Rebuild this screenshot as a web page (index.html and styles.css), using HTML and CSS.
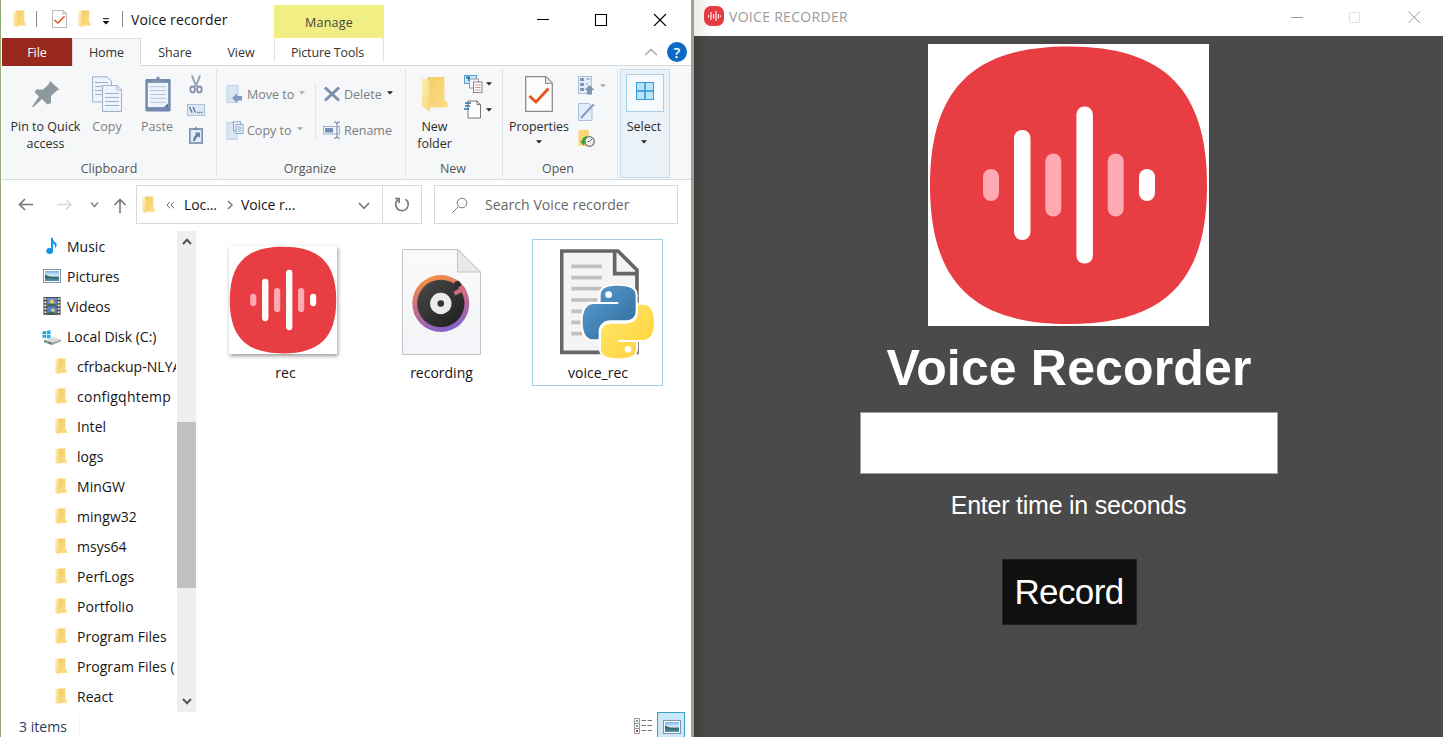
FILE: index.html
```html
<!DOCTYPE html>
<html lang="en">
<head>
<meta charset="utf-8">
<title>Voice recorder</title>
<link rel="stylesheet" href="styles.css">
</head>
<body>
<svg class="defs" aria-hidden="true">
  <defs>
    <linearGradient id="gFold" x1="0" y1="0" x2="1" y2="1"><stop offset="0" stop-color="#f3cb67"/><stop offset="1" stop-color="#fcdf86"/></linearGradient>
    <linearGradient id="gFlap" x1="0" y1="0" x2="1" y2="1"><stop offset="0" stop-color="#fdeeb4"/><stop offset="1" stop-color="#f8d778"/></linearGradient>
    <linearGradient id="gBlue" x1="0" y1="0" x2="1" y2="1"><stop offset="0" stop-color="#5a9fd4"/><stop offset="1" stop-color="#306998"/></linearGradient>
    <linearGradient id="gYellow" x1="1" y1="1" x2="0" y2="0"><stop offset="0" stop-color="#ffe873"/><stop offset="1" stop-color="#ffd133"/></linearGradient>
    <linearGradient id="gRing" x1=".3" y1="0" x2=".6" y2="1"><stop offset="0" stop-color="#f79342"/><stop offset=".5" stop-color="#c8698a"/><stop offset="1" stop-color="#8163cf"/></linearGradient>
    <linearGradient id="gSky" x1="0" y1="0" x2="0" y2="1"><stop offset="0" stop-color="#7ab4f2"/><stop offset=".5" stop-color="#dceffc"/><stop offset=".6" stop-color="#3f7376"/><stop offset="1" stop-color="#4f93ba"/></linearGradient>
    <linearGradient id="gPaper" x1="0" y1="0" x2="0" y2="1"><stop offset="0" stop-color="#fafafa"/><stop offset="1" stop-color="#f2f4f7"/></linearGradient>
    <linearGradient id="gVinyl" x1="0" y1="0" x2="1" y2="1"><stop offset="0" stop-color="#4a4a4a"/><stop offset="1" stop-color="#1d1d1d"/></linearGradient>
  </defs>
  <symbol id="folder" viewBox="0 0 13 18" preserveAspectRatio="none">
    <path d="M3 .5H11.3V12.2L12.8 13V15.8H3Z" fill="url(#gFold)"/><path d="M.4.6 4.2 2.7V17.8L.4 15Z" fill="url(#gFlap)"/>
  </symbol>
  <symbol id="logo" viewBox="0 0 281 281">
    <path d="M2 141C2 45 45 2 140.500 2S279 45 279 141 236 279.500 140.500 279.500 2 237 2 141Z" fill="#e83d43"/>
    <g fill="#ffaab2"><rect x="55" y="124.500" width="16" height="32" rx="8"/><rect x="117.300" y="109" width="16" height="63" rx="8"/><rect x="179.700" y="109" width="16" height="63" rx="8"/></g>
    <g fill="#fff"><rect x="86" y="85.500" width="16.500" height="110" rx="8"/><rect x="148.400" y="62" width="16.500" height="157" rx="8"/><rect x="211" y="124.500" width="16" height="32" rx="8"/></g>
  </symbol>
  <symbol id="caret" viewBox="0 0 6 4"><path d="M0 .3H6L3 3.500Z"/></symbol>
  <symbol id="checkdoc" viewBox="0 0 28 36" preserveAspectRatio="none">
    <path d="M.7.7H21L27.300 7V35.300H.7Z" fill="#fcfcfc" stroke="#8c8c8c" stroke-width="1.300"/><path d="M20.500.7V7.400H27.300" fill="#e6e6e6" stroke="#8c8c8c"/>
    <path d="M4.500 20 11 26 23.500 12.500" fill="none" stroke="#e35b22" stroke-width="3"/>
  </symbol>
  <symbol id="picture" viewBox="0 0 18 14"><rect x=".5" y=".5" width="17" height="13" fill="#fff" stroke="#8493a5"/><rect x="2" y="2" width="14" height="10" fill="url(#gSky)"/><path d="M2 5.500 8 8 16 8.500V10L2 9Z" fill="#386b62"/></symbol>
</svg>

<main class="desktop">
  <section class="explorer">
    <header class="titlebar">
      <svg class="qa-folder"><use href="#folder"/></svg>
      <i class="bar"></i>
      <svg class="qa-check"><use href="#checkdoc"/></svg>
      <svg class="qa-folder second"><use href="#folder"/></svg>
      <svg class="qa-menu" viewBox="0 0 8 7"><path d="M1 .7H7" stroke="#111" stroke-width="1"/><path d="M.5 3H7.500L4 6.500Z" fill="#111"/></svg>
      <i class="bar dark"></i>
      <span class="wtitle">Voice recorder</span>
      <span class="manage">Manage</span>
      <svg class="controls" viewBox="0 0 132 14" fill="none" stroke="#000" stroke-width="1.100"><path d="M0 7.500H12M58.500 2.500H69.500V13.500H58.500ZM117 2 129 14M129 2 117 14"/></svg>
    </header>

    <nav class="tabs">
      <span class="tab file">File</span><span class="tab home">Home</span><span class="tab share">Share</span><span class="tab view">View</span><span class="tab tools">Picture Tools</span>
      <svg class="chev-up" viewBox="0 0 14 8"><path d="M1 7 7 1.500 13 7" fill="none" stroke="#a5a5a5" stroke-width="1.300"/></svg>
      <span class="help">?</span>
    </nav>

    <div class="ribbon">
      <section class="group clipboard">
        <div class="tools-row">
          <div class="big pin"><svg viewBox="0 0 40 36"><path d="M24 5 33.500 13.500 31 14.500 25 20 25 27 21.500 28.500 16 23 7.500 31 6 30.500 13 20.500 8.500 16 10.500 13.500 17 13.500 22.500 8.500Z" fill="#8e989f"/></svg><span>Pin to Quick<br>access</span></div>
          <div class="big copy dim"><svg viewBox="0 0 32 36"><g fill="#edf3fb" stroke="#9fb0cc"><path d="M1.500.8H16L20.500 5V26H1.500Z"/><path d="M4 6.500H17M4 10.500H17M4 14.500H17M4 18.500H17"/><path d="M11.500 9.500H26L30.500 14V35.500H11.500ZM26 9.500V14H30.500M14 17.500H28M14 21.500H28M14 25.500H28M14 29.500H28"/></g></svg><span>Copy</span></div>
          <div class="big paste dim"><svg viewBox="0 0 28 37"><rect x="1" y="3" width="26" height="33.500" rx="1.500" fill="#7388af"/><rect x="3.500" y="7" width="21" height="25" fill="#edf4fb"/><path d="M6 11H22M6 15H22M6 19H22M6 23H22M6 27H22" stroke="#b2c2da"/><path d="M8 7V4.500H12Q12 .5 14 .5T16 4.500H20V7Z" fill="#8191ad"/><path d="M24.500 32V28L20 32Z" fill="#5b6e94"/></svg><span>Paste</span></div>
          <div class="minis">
            <svg width="14" height="19" viewBox="0 0 14 19"><path d="M3 .5Q6 10 9 12M11 .5Q8 10 5 12" fill="none" stroke="#94a2b7" stroke-width="2"/><g fill="none" stroke="#8292ad" stroke-width="1.800"><ellipse cx="3.600" cy="14.500" rx="2.300" ry="3"/><ellipse cx="10.400" cy="14.500" rx="2.300" ry="3"/></g></svg>
            <svg width="18" height="12" viewBox="0 0 18 12"><rect x=".5" y=".5" width="17" height="11" fill="#dce8f6" stroke="#afc0d9"/><path d="M2.500 3 5 8.500M6 3 8.500 8.500" stroke="#60769a" stroke-width="1.400"/><path d="M10 8.500H16" stroke="#60769a" stroke-width="1.500" stroke-dasharray="1.300 .8"/></svg>
            <svg width="14" height="18" viewBox="0 0 14 18"><rect x=".9" y="3" width="12.200" height="14" fill="#e5eefa" stroke="#7b90b4" stroke-width="1.700"/><path d="M4 4V2H6L7 .3 8 2H10V4Z" fill="#7e91af"/><path d="M5.500 6.500H11V12L9.300 10.300Q6.500 12 6 15H4Q4 11 7.200 8.200Z" fill="#6680aa"/></svg>
          </div>
        </div>
        <div class="caption">Clipboard</div>
      </section>

      <section class="group organize">
        <div class="tools-row">
          <div class="pairs first">
            <div class="cmd dim"><svg width="18" height="18" viewBox="0 0 18 18"><rect x="1" y=".5" width="11" height="17" fill="#d8e5f5" stroke="#c0d2e8"/><path d="M6 13 11 8.500V11H16V15.500H11V18Z" fill="#859bbd"/></svg><span>Move to</span><svg class="caret" fill="#aaa"><use href="#caret"/></svg></div>
            <div class="cmd dim"><svg width="18" height="19" viewBox="0 0 18 19"><rect x="1" y="1.500" width="10" height="17" fill="#d8e5f5" stroke="#c0d2e8"/><g fill="#edf4fc" stroke="#90a5c5"><rect x="7.500" y=".8" width="7" height="9"/><rect x="10" y="3.500" width="7" height="9"/><path d="M11.500 6H15.500M11.500 8H15.500M11.500 10H15.500"/></g></svg><span>Copy to</span><svg class="caret" fill="#aaa"><use href="#caret"/></svg></div>
          </div>
          <div class="pairs">
            <div class="cmd dim"><svg width="18" height="16" viewBox="0 0 18 16"><path d="M2 1.500 16 14.500M16 1.500 2 14.500" stroke="#7b8eaa" stroke-width="3"/></svg><span>Delete</span><svg class="caret" fill="#222"><use href="#caret"/></svg></div>
            <div class="cmd dim"><svg width="18" height="18" viewBox="0 0 18 18"><rect x=".5" y="5.500" width="16" height="7.500" fill="#edf3fb" stroke="#9cb0ce"/><rect x="2" y="7" width="8" height="4.500" fill="#7890b9"/><path d="M11 .8Q14 .8 14 3V15Q14 17.200 11 17.200M17 .8Q14 .8 14 3V15Q14 17.200 17 17.200" fill="none" stroke="#889cbb" stroke-width="1.300"/></svg><span>Rename</span></div>
          </div>
        </div>
        <div class="caption">Organize</div>
      </section>

      <section class="group new">
        <div class="tools-row">
          <div class="big newf"><svg><use href="#folder"/></svg><span>New<br>folder</span></div>
          <div class="minis wide">
            <div><svg width="19" height="19" viewBox="0 0 19 19"><rect x=".5" y="1.500" width="12" height="8" fill="#c9e9fb" stroke="#5d9fc4"/><path d="M2 3.500H5V7" fill="none" stroke="#1e73af" stroke-width="2"/><rect x="5.500" y="5" width="9" height="9" fill="#f8f8f8" stroke="#999"/><rect x="9.500" y="8" width="8.500" height="10.500" fill="#fff" stroke="#888"/><path d="M11 11H16.500M11 13.500H16.500M11 16H16.500" stroke="#d29795"/></svg><svg class="caret" fill="#222"><use href="#caret"/></svg></div>
            <div><svg width="19" height="19" viewBox="0 0 19 19"><path d="M4 1H13L16.500 4.500V18H4ZM13 1V4.500H16.500" fill="#fff" stroke="#777"/><path d="M1 3H7M1 6H6M0 9H5" stroke="#2873b2" stroke-width="1.500"/></svg><svg class="caret" fill="#222"><use href="#caret"/></svg></div>
          </div>
        </div>
        <div class="caption">New</div>
      </section>

      <section class="group open">
        <div class="tools-row">
          <div class="big props"><svg><use href="#checkdoc"/></svg><span>Properties</span><svg class="caret" fill="#222"><use href="#caret"/></svg></div>
          <div class="minis wide">
            <div><svg width="17" height="19" viewBox="0 0 17 19"><rect x=".5" y=".5" width="13" height="17" fill="#e4edf9" stroke="#b2c0d6"/><path d="M2 2H6V5H2ZM2 7H6V10H2ZM2 12H6V15H2Z" fill="#8297bb"/><path d="M8 3H12M8 8H10" stroke="#8297bb"/><path d="M11.500 9 16.500 14H14V18.500H9V14H6.500Z" fill="#8194b2"/></svg><svg class="caret" fill="#aaa"><use href="#caret"/></svg></div>
            <svg width="17" height="18" viewBox="0 0 17 18"><path d="M.5.5H11L14 4V17.500H.5Z" fill="#e2edfa" stroke="#aebfd7"/><path d="M3 15 14 3 16 1.500" fill="none" stroke="#8498b7" stroke-width="2"/></svg>
            <svg width="17" height="19" viewBox="0 0 17 19"><path d="M.5 1H11V17H.5Z" fill="#f7d776"/><circle cx="11.500" cy="12.500" r="4.800" fill="#eee" stroke="#777" stroke-width="1.300"/><path d="M14 10 11.500 12.500H9.500" fill="none" stroke="#666"/><path d="M9 7Q4 8 4 12H2L5.500 16.500 8 12H6Q6 10 9 9Z" fill="#35a236"/></svg>
          </div>
        </div>
        <div class="caption">Open</div>
      </section>

      <section class="select">
        <div class="selbox"><svg width="18" height="18" viewBox="0 0 18 18"><rect x=".5" y=".5" width="17" height="17" fill="#b9e2fb" stroke="#3b9bd5"/><path d="M9 0V18M0 9H18" stroke="#3093d1" stroke-width="1.500"/></svg></div>
        <span>Select</span><svg class="caret" fill="#222"><use href="#caret"/></svg>
      </section>
    </div>

    <div class="address">
      <svg class="nav-icons" viewBox="0 0 110 20" fill="none" stroke-width="1.600"><path d="M15 9.500H1.500M7 4 1.500 9.500 7 15" stroke="#777"/><path d="M39 9.500H53M48 4.500 53 9.500 48 14.500" stroke="#d8d8d8"/><path d="M73 7.500 76.500 11.500 80 7.500" stroke="#888"/><path d="M102 18V4.500M96.500 10 102 4.500 107.500 10" stroke="#777"/></svg>
      <div class="path">
        <svg class="p-folder"><use href="#folder"/></svg>
        <svg class="back2" viewBox="0 0 9 8"><path d="M4 .8 1 4 4 7.200M8 .8 5 4 8 7.200" fill="none" stroke="#666"/></svg>
        <span class="loc">Loc...</span>
        <svg class="sep" viewBox="0 0 6 10"><path d="M1 1 5 5 1 9" fill="none" stroke="#777" stroke-width="1.500"/></svg>
        <span class="voice">Voice r...</span>
        <svg class="down" viewBox="0 0 12 8"><path d="M1 1 6 6.300 11 1" fill="none" stroke="#777" stroke-width="1.700"/></svg>
        <div class="refresh"><svg width="16" height="17" viewBox="0 0 16 17"><path d="M11.500 3.200A6.300 6.300 0 1 1 4 3.500M1 2.500H5.200V7" fill="none" stroke="#7a7a7a" stroke-width="1.700"/></svg></div>
      </div>
      <div class="search"><svg width="16" height="16" viewBox="0 0 16 16"><circle cx="10" cy="6" r="4.800" fill="none" stroke="#777"/><path d="M6.500 9.500.5 15.500" stroke="#777"/></svg><span>Search Voice recorder</span></div>
    </div>

    <div class="content">
      <aside class="tree">
        <ul>
          <li><svg viewBox="0 0 18 18"><path d="M9 1V13.500" stroke="#1599e8" stroke-width="2"/><ellipse cx="6.700" cy="14" rx="3.400" ry="2.900" fill="#1295e8"/><path d="M9 0Q10 4 13.500 6.500 14.500 9 12 11.500 13 7.500 9 6Z" fill="#1595e2"/></svg>Music</li>
          <li><svg><use href="#picture"/></svg>Pictures</li>
          <li><svg class="vid" viewBox="0 0 18 19"><rect width="18" height="19" fill="#46464c"/><path d="M2 1V19M16 1V19" stroke="#eee" stroke-width="2" stroke-dasharray="2 1.500"/><rect x="4" y="1" width="10" height="8" fill="#658fd6"/><rect x="4" y="10" width="10" height="8" fill="#5c84d4"/><circle cx="9" cy="5" r="2.200" fill="#ead441"/><circle cx="10" cy="14" r="1.800" fill="#e2d34a"/><path d="M5 8H13M5 17H12" stroke="#416537" stroke-width="2"/><path d="M11 4H13" stroke="#db5140" stroke-width="2"/></svg>Videos</li>
          <li><svg class="disk" viewBox="0 0 20 16"><path d="M.5 2.500 4 2V5H.5ZM4.800 1.900 8.500 1.200V5H4.800ZM.5 5.800H4V9L.5 8.500ZM4.800 5.800H8.500V9.700L4.800 9.100Z" fill="#1ca8dc"/><path d="M2 11 11 8 19 10.500 10 14Z" fill="#d9dcdf"/><path d="M2 11 10 13.500V16L2 13.300Z" fill="#777b7e"/><path d="M10 13.500 19 10.500V12.500L10 16Z" fill="#a5a8aa"/><path d="M4 13 6 13.700" stroke="#91e35a"/></svg>Local Disk (C:)</li>
          <li class="sub"><svg><use href="#folder"/></svg>cfrbackup-NLYA</li>
          <li class="sub"><svg><use href="#folder"/></svg><span class="airy">configqhtemp</span></li>
          <li class="sub"><svg><use href="#folder"/></svg>Intel</li>
          <li class="sub"><svg><use href="#folder"/></svg>logs</li>
          <li class="sub"><svg><use href="#folder"/></svg>MinGW</li>
          <li class="sub"><svg><use href="#folder"/></svg>mingw32</li>
          <li class="sub"><svg><use href="#folder"/></svg>msys64</li>
          <li class="sub"><svg><use href="#folder"/></svg>PerfLogs</li>
          <li class="sub"><svg><use href="#folder"/></svg>Portfolio</li>
          <li class="sub"><svg><use href="#folder"/></svg>Program Files</li>
          <li class="sub"><svg><use href="#folder"/></svg>Program Files (</li>
          <li class="sub"><svg><use href="#folder"/></svg>React</li>
        </ul>
        <div class="scroll">
          <svg viewBox="0 0 10 7"><path d="M1 6 5 1.800 9 6" fill="none" stroke="#555" stroke-width="2"/></svg>
          <div class="thumb"></div>
          <svg viewBox="0 0 10 7"><path d="M1 1 5 5.200 9 1" fill="none" stroke="#555" stroke-width="2"/></svg>
        </div>
      </aside>
      <div class="files">
        <figure><div class="art"><svg class="rec"><use href="#logo"/></svg></div><figcaption>rec</figcaption></figure>
        <figure><div class="art doc"><svg width="79" height="106" viewBox="0 0 79 106"><path d="M.5.500H56L78.500 23V105.500H.5Z" fill="url(#gPaper)" stroke="#c2c4c6"/><path d="M55.500.500V23H78.500Z" fill="#e8e9ea" stroke="#c2c4c6"/><circle cx="38.800" cy="54.500" r="28.500" fill="url(#gRing)"/><circle cx="38.800" cy="54.500" r="23.700" fill="url(#gVinyl)"/><path d="M52 33.500 56.500 31.500 60 36 54 40Z" fill="#2e2e2e"/><path d="M51.500 43 61 36.500 64 41 53.500 46.500Z" fill="#cc697d"/><circle cx="38.800" cy="54.500" r="10.700" fill="#ececec"/><circle cx="38.800" cy="54.500" r="3.300" fill="#333"/></svg></div><figcaption>recording</figcaption></figure>
        <figure class="picked"><div class="art py"><svg width="95.300" height="110" viewBox="388 207 286 330"><path d="M393 213H562L619 270V517H393Z" fill="#f4f4f4" stroke="#666" stroke-width="11"/><path d="M552 213V281H619" fill="none" stroke="#666" stroke-width="11"/><path d="M422 259H513M422 293H513M422 326H513M422 360H500M422 394H460M422 427H450M422 461H455" stroke="#c0c0c0" stroke-width="11"/>
          <g stroke="#fff" stroke-width="12" stroke-linejoin="round" paint-order="stroke"><path fill="url(#gBlue)" d="M562 317C530 317 510 324 510 345V366H563V372H490C468 372 456 390 456 425 456 460 468 478 488 478H504V455C504 435 520 421 540 421H588C604 421 615 410 615 394V345C615 325 595 317 562 317Z"/><path fill="url(#gYellow)" transform="rotate(180 563 426)" d="M562 317C530 317 510 324 510 345V366H563V372H490C468 372 456 390 456 425 456 460 468 478 488 478H504V455C504 435 520 421 540 421H588C604 421 615 410 615 394V345C615 325 595 317 562 317Z"/></g><circle cx="534" cy="344" r="10" fill="#fff"/><circle cx="592" cy="508" r="10" fill="#fff"/></svg></div><figcaption>voice_rec</figcaption></figure>
      </div>
    </div>

    <footer class="status"><span>3 items</span><i></i>
      <svg class="list" width="18" height="16" viewBox="0 0 18 16"><path d="M.5.500H5.500V15.500H.5ZM.5 5.500H5.500M.5 10.500H5.500" fill="#fff" stroke="#999"/><path d="M2 3H4M2 8H4" stroke="#7397aa" stroke-width="2"/><path d="M2 13H4" stroke="#a34040" stroke-width="2"/><path d="M7.500 2.500H18M7.500 7.500H18M7.500 12.500H18" stroke="#777" stroke-dasharray="4.500 1.500"/></svg>
      <div class="large"><svg width="18" height="14"><use href="#picture"/></svg></div>
    </footer>
  </section>

  <section class="app">
    <header class="app-title"><svg class="app-icon" viewBox="0 0 20 20"><rect width="20" height="20" rx="7" fill="#e53b42"/><path d="M4.500 9V11.500M7 6V14M9.500 8V12.500M12 5V15M14.300 8V12.500M16.300 9.300V11" stroke="#fff" stroke-width="1.100"/></svg><span>VOICE RECORDER</span>
      <svg class="app-controls" viewBox="0 0 132 14" fill="none" stroke="#999"><path d="M0 7.500H12M117.500 1.500 129 13M129 1.500 117.500 13"/><path d="M58.500 2.500H68.500V12.500H58.500Z" stroke="#e2e2e2"/></svg></header>
    <div class="app-body">
      <svg class="hero"><use href="#logo"/></svg>
      <h1>Voice Recorder</h1>
      <input class="entry" type="text" aria-label="Enter time in seconds">
      <p>Enter time in seconds</p>
      <button type="button">Record</button>
    </div>
  </section>
</main>
</body>
</html>
```
FILE: styles.css
```css
* { box-sizing: border-box; }
body { margin: 0; width: 1443px; height: 737px; overflow: hidden; font-family: "Open Sans", "Noto Sans", sans-serif; font-size: 14px; color: #151515; white-space: nowrap; }
svg { display: block; flex: none; }
.defs { position: absolute; width: 0; height: 0; }
.desktop { display: flex; height: 737px; }
.explorer { width: 694px; height: 737px; border-left: 1px solid #93ab7d; border-right: 3px solid #97a78c; padding-left: 1px; background: #fff; display: flex; flex-direction: column; }

.titlebar { display: flex; align-items: center; height: 38px; flex: none; }
.qa-folder { width: 13px; height: 18px; margin-left: 11px; }
.qa-folder.second { margin-left: 11px; }
.qa-check { width: 15px; height: 18px; margin-left: 15px; }
.bar { width: 1px; height: 16px; background: #888; margin-left: 10px; }
.qa-menu { width: 8px; height: 7px; margin: 4px 0 0 11px; }
.bar.dark { margin-left: 12px; }
.wtitle { margin-left: 8px; width: 97px; letter-spacing: .1px; }
.manage { margin: 5px 0 0 46px; width: 110px; height: 33px; line-height: 36px; background: #f1ef83; text-align: center; color: #444; font-size: 12.500px; letter-spacing: .2px; }
.controls { width: 132px; height: 14px; margin-left: 153px; }

.tabs { display: flex; height: 28px; flex: none; font-size: 12.500px; line-height: 30px; color: #333; text-align: center; border-bottom: 1px solid #d5dadf; width: 689px; letter-spacing: -.05px; }
.tab { height: 28px; flex: none; }
.file { width: 70px; background: #99281f; color: #fff; }
.home { width: 69px; background: #f5f7f9; border: 1px solid #d8dde2; border-bottom: 0; line-height: 28px; }
.share { width: 68px; }
.view { width: 64px; }
.tools { width: 110px; margin-left: 1px; padding-right: 3px; border-left: 1px solid #e0e0e0; border-right: 1px solid #e0e0e0; height: 24px; letter-spacing: -.15px; }
.chev-up { width: 14px; height: 8px; margin: 10px 0 0 260px; }
.help { margin: 4px 0 0 9px; width: 20px; height: 20px; border-radius: 50%; background: #0a6ac4; color: #fff; font-size: 15px; line-height: 20px; font-weight: 600; }

.ribbon { display: flex; height: 114px; width: 689px; flex: none; background: #f5f7f9; border-bottom: 1px solid #d8dcdf; font-size: 12.500px; color: #2c2c2c; }
.group { height: 108px; margin-top: 3px; border-right: 1px solid #dfe3e6; display: flex; flex-direction: column; justify-content: space-between; }
.tools-row { display: flex; }
.caption { text-align: center; height: 19px; line-height: 22px; padding-right: 2px; color: #555; }
.dim { color: #7e7e7e; }
.caret { width: 6px; height: 4px; }
.big { display: flex; flex-direction: column; align-items: center; text-align: center; line-height: 17px; padding-top: 7px; }
.big > svg:first-child { height: 36px; margin-bottom: 6px; }
.clipboard { width: 215px; }
.clipboard .caption { padding-right: 0; }
.pin { width: 87px; margin-right: -1px; }
.pin > svg:first-child { width: 40px; }
.copy { width: 38px; }
.copy > svg:first-child { width: 32px; }
.paste { width: 62px; }
.paste > svg:first-child { width: 28px; margin-left: 1px; }
.minis { display: flex; flex-direction: column; align-items: center; gap: 10px; padding-top: 6px; width: 16px; }
.organize { width: 189px; }
.pairs { display: flex; flex-direction: column; gap: 18px; padding: 16px 0 0 7px; height: 75px; }
.pairs.first { padding-left: 9px; width: 98px; }
.pairs.first + .pairs { border-left: 1px solid #dfe3e6; margin-top: 14px; padding-top: 2px; height: 56px; }
.cmd { display: flex; align-items: center; height: 18px; gap: 3px; }
.cmd span { margin-right: 2px; }
.cmd .caret { margin-top: -2px; }
.new { width: 97px; }
.newf { width: 57px; }
.newf > svg:first-child { width: 27px; }
.minis.wide { gap: 7px; align-items: flex-start; width: 32px; padding-top: 5px; }
.new .minis { margin-left: 1px; }
.wide div { display: flex; align-items: center; gap: 3px; }
.open { width: 115px; }
.open .caption { padding-right: 4px; }
.props { width: 72px; letter-spacing: -.05px; }
.props > svg:first-child { width: 28px; }
.props .caret { margin-top: 5px; }
.open .minis { margin-left: 3px; padding-top: 7px; gap: 8px; }
.open .wide div { gap: 5px; }
.select { width: 50px; height: 109px; margin: 3px 0 0 2px; border: 1px solid #c2dcf1; background: #ebf2f7; display: flex; flex-direction: column; align-items: center; padding-top: 4px; }
.selbox { width: 38px; height: 38px; border: 1px solid #a8cfec; background: #f6f9fc; display: grid; place-items: center; }
.selbox svg { margin-top: -5px; }
.select span { margin: 6px 2px 0 0; line-height: 17px; }
.select .caret { margin: 5px 2px 0 0; }

.address { display: flex; height: 51px; flex: none; padding-top: 5px; }
.nav-icons { width: 110px; height: 20px; margin: 10px 0 0 16px; }
.path { margin-left: 8px; width: 286px; height: 39px; border: 1px solid #d9d9d9; display: flex; align-items: center; }
.p-folder { width: 13px; height: 18px; margin-left: 5px; }
.back2 { width: 9px; height: 8px; margin-left: 11px; }
.loc { margin-left: 9px; width: 34px; letter-spacing: -.1px; }
.sep { width: 6px; height: 10px; margin-left: 9px; }
.voice { margin-left: 8px; width: 56px; letter-spacing: -.1px; }
.down { width: 12px; height: 8px; margin: 2px 0 0 61px; }
.refresh { margin-left: auto; width: 39px; height: 37px; border-left: 1px solid #d9d9d9; display: grid; place-items: center; }
.search { margin-left: 12px; width: 244px; height: 39px; border: 1px solid #d9d9d9; display: flex; align-items: center; color: #666; }
.search svg { margin-left: 17px; }
.search span { margin-left: 17px; letter-spacing: .07px; }

.content { display: flex; height: 481px; flex: none; }
.tree { display: flex; width: 196px; border-right: 1px solid #f8f8f8; }
.tree ul { list-style: none; margin: 0; padding: 0; width: 174px; flex: none; overflow: hidden; }
.tree li { display: flex; align-items: center; height: 30px; padding-left: 41px; gap: 6px; }
.tree li svg { width: 18px; height: 18px; }
.tree li .disk { width: 20px; height: 16px; margin: 2px -1px 0 -1px; }
.tree li.sub { padding-left: 53px; gap: 10px; letter-spacing: .05px; }
.tree li.sub svg { width: 12px; height: 17px; }
.airy { letter-spacing: .25px; }
.scroll { width: 19px; flex: none; background: #efefef; margin-left: 1px; display: flex; flex-direction: column; align-items: center; padding: 7px 0; }
.scroll svg { width: 10px; height: 7px; }
.thumb { width: 19px; height: 166px; background: #c1c1c1; margin: 177px 0 110px; }
.files { display: flex; align-items: flex-start; gap: 26px; padding: 8px 0 0 22px; }
.files figure { margin: 0; width: 130px; height: 147px; padding-top: 6px; display: flex; flex-direction: column; align-items: center; border: 1px solid transparent; }
.files figure.picked { border-color: #a4cde8; width: 131px; }
.art { height: 112px; flex: none; }
.rec { width: 108px; height: 108px; background: #fff; box-shadow: 1px 2px 4px #999; margin-right: 4px; }
.doc { padding-top: 3px; }
.py { padding: 3px 0 0 20px; }
figcaption { margin: 5px 0 0 1px; line-height: 20px; }
.status { display: flex; height: 25px; flex: none; padding-left: 17px; line-height: 29px; color: #273b5c; letter-spacing: .05px; }
.status span { width: 60px; }
.status i { width: 1px; height: 22px; margin-top: 3px; background: #f4f4f4; }
.list { margin: 6px 0 0 554px; }
.large { width: 28px; height: 25px; margin-left: 5px; border: 1px solid #3a9fcd; border-bottom: 0; background: #cae8f8; padding: 7px 0 0 5px; }

.app { width: 749px; background: #4a4a4a; display: flex; flex-direction: column; }
.app-title { height: 36px; flex: none; display: flex; align-items: center; background: linear-gradient(90deg, #ebebeb, #fff 20px); color: #9a9a9a; }
.app-icon { width: 20px; height: 20px; margin: -4px 0 0 10px; }
.app-title span { margin: -3px 0 0 5px; width: 120px; letter-spacing: .3px; }
.app-controls { width: 132px; height: 14px; margin: -3px 0 0 442px; }
.app-body { display: flex; flex-direction: column; align-items: center; height: 701px; padding: 8px 0 0 1px; background: linear-gradient(90deg, #404040, #4a4a4a 14px); font-family: "Liberation Sans", Arial, sans-serif; color: #fff; }
.hero { width: 281px; height: 282px; background: #fff; margin-right: 2px; }
h1 { margin: 14px 0 0; font-size: 50px; line-height: 57px; letter-spacing: .15px; }
.entry { margin: 15px 1px 0 0; width: 418px; height: 62px; border: 1px solid #a0a0a0; background: #fff; border-radius: 0; padding: 0 8px; font-size: 34px; flex: none; }
p { margin: 17px 1px 0 0; font-size: 25px; line-height: 29px; letter-spacing: -.23px; }
button { margin: 39px 0 0; width: 135px; height: 66px; padding: 0; border: 1px solid #222; border-radius: 0; background: #101010; color: #fff; font: 35px "Liberation Sans", Arial, sans-serif; letter-spacing: -.6px; }
```
